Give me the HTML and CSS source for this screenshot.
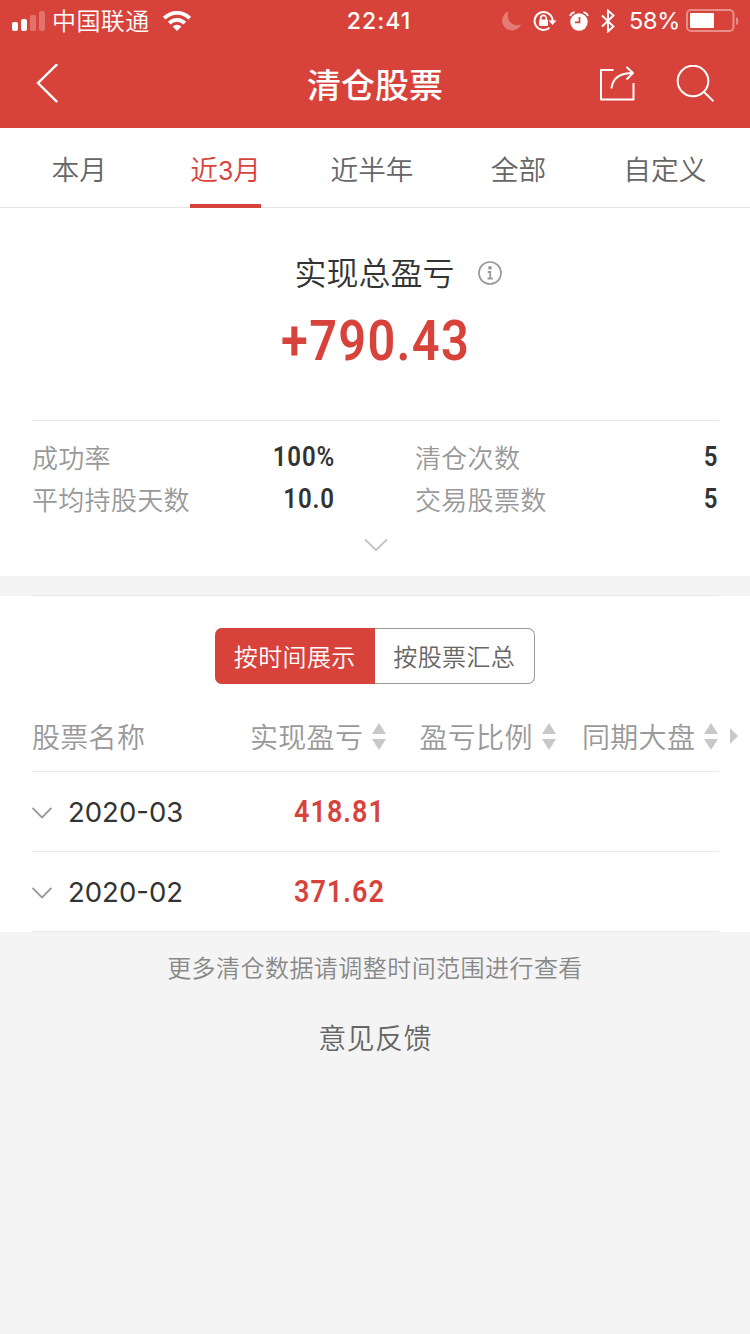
FILE: index.html
```html
<!DOCTYPE html>
<html lang="zh-CN">
<head>
<meta charset="utf-8">
<title>清仓股票</title>
<link rel="stylesheet" href="styles.css">
</head>
<body>
<header class="top">
  <div class="status">
    <div class="status-left">
      <svg width="34" height="20" viewBox="0 0 34 20" fill="#fff"><rect x="0" y="11" width="6" height="9" rx="2"/><rect x="9" y="8" width="6" height="12" rx="2"/><rect x="18" y="4" width="6" height="16" rx="2" opacity=".25"/><rect x="27" y="0" width="6" height="20" rx="2" opacity=".25"/></svg>
      <span class="carrier">中国联通</span>
      <svg class="wifi" width="28" height="21" viewBox="0 0 28 21" fill="none" stroke="#fff" stroke-width="3.8"><path d="M1.3 7.2a18 18 0 0 1 25.4 0"/><path d="M6.2 12.2a11 11 0 0 1 15.6 0"/><path d="M14 20l-4.4-4.4a6.2 6.2 0 0 1 8.8 0z" fill="#fff" stroke="none"/></svg>
    </div>
    <div class="clock">22:41</div>
    <div class="status-right">
      <svg width="20" height="20" viewBox="0 0 20 20" fill="#fff" opacity=".3"><path d="M6.500 .5A9.800 9.800 0 1 0 19 13.500C11 16.500 3.500 9.500 6.500 .5z"/></svg>
      <svg class="lock" width="24" height="22" viewBox="0 0 24 22"><path d="M19.600 11A9 9 0 1 0 16.500 17.800" fill="none" stroke="#fff" stroke-width="2"/><path d="M15.500 10.500h8L19.500 15z" fill="#fff"/><rect x="6" y="9.500" width="9" height="6.500" rx="1" fill="#fff"/><path d="M7.700 10.500V8.200a2.800 2.800 0 0 1 5.600 0v2.300" fill="none" stroke="#fff" stroke-width="1.6"/></svg>
      <svg class="alarm" width="20" height="20" viewBox="0 0 20 20"><circle cx="10" cy="11" r="8.7" fill="#fff"/><path d="M1 5Q2 2 5.6 1.1M19 5Q18 2 14.4 1.1" fill="none" stroke="#fff" stroke-width="1.7"/><path d="M10.5 6v5.3H6" fill="none" stroke="#d7433b" stroke-width="1.7"/></svg>
      <svg class="bt" width="14" height="24" viewBox="0 0 14 24" fill="none" stroke="#fff" stroke-width="1.9"><path d="M1 6.5l11.5 11L7 22.5v-21l5.5 5L1 17.5"/></svg>
      <span class="pct">58%</span>
      <svg width="53" height="24" viewBox="0 0 53 24"><rect x="1" y="1" width="46.500" height="21" rx="4" fill="none" stroke="#fff" stroke-opacity=".4" stroke-width="2"/><rect x="4" y="4" width="24" height="15" rx="1" fill="#fff"/><path d="M50 8q2.500 1 2.500 4t-2.500 4z" fill="#fff" opacity=".4"/></svg>
    </div>
  </div>
  <div class="nav">
    <svg width="22" height="40" viewBox="0 0 22 40" fill="none" stroke="#fff" stroke-width="2.4" stroke-linecap="round"><path d="M20.500 .8L2 19l18.500 18.300"/></svg>
    <h1 class="nav-title">清仓股票</h1>
    <div class="nav-actions">
      <svg width="36" height="36" viewBox="0 0 36 36" fill="none" stroke="#fff" stroke-width="2" stroke-linejoin="round"><path d="M13.500 4H1V33.500H33.500V17"/><path d="M11.500 22.500C12.500 12.500 19.500 7 33 7M26.500 1l6.500 6-6.500 6.500"/></svg>
      <svg width="38" height="38" viewBox="0 0 38 38" fill="none" stroke="#fff" stroke-width="2"><circle cx="17" cy="16" r="15.300"/><path d="M27.500 26.500l10 9.800"/></svg>
    </div>
  </div>
</header>

<nav class="tabs">
  <a class="tab"><span>本月</span></a>
  <a class="tab active"><span>近<b class="tab-num">3</b>月</span></a>
  <a class="tab"><span>近半年</span></a>
  <a class="tab"><span>全部</span></a>
  <a class="tab"><span>自定义</span></a>
</nav>

<section class="summary">
  <div class="sum-title"><span>实现总盈亏</span>
    <svg width="24" height="24" viewBox="0 0 24 24" fill="none" stroke="#999"><circle cx="12" cy="12" r="11" stroke-width="1.700"/><circle cx="12" cy="6.800" r="1.900" fill="#999" stroke="none"/><path d="M9.800 11h2.400v6.500M9.500 17.500h5.200" stroke-width="1.800"/></svg>
  </div>
  <div class="total"><span>+790.43</span></div>
  <div class="stats">
    <div class="stat"><span>成功率</span><strong>100%</strong></div>
    <div class="stat"><span>清仓次数</span><strong>5</strong></div>
    <div class="stat"><span>平均持股天数</span><strong>10.0</strong></div>
    <div class="stat"><span>交易股票数</span><strong>5</strong></div>
  </div>
  <svg class="expand" width="24" height="14" viewBox="0 0 24 14" fill="none" stroke="#c8c8c8" stroke-width="2.200"><path d="M1 1.500l11 10.500 11-10.500"/></svg>
</section>
<div class="gap"></div>

<section class="holdings">
  <div class="segments"><span class="seg on">按时间展示</span><span class="seg">按股票汇总</span></div>
  <div class="thead">
    <span class="c1">股票名称</span>
    <span class="c2">实现盈亏<i class="sort"></i></span>
    <span class="c3">盈亏比例<i class="sort"></i></span>
    <span class="c4">同期大盘<i class="sort"></i></span>
    <i class="more"></i>
  </div>
  <div class="row"><svg width="20" height="12" viewBox="0 0 20 12" fill="none" stroke="#999" stroke-width="1.800"><path d="M.500 1l9.500 9.500L19.500 1"/></svg><span class="date">2020-03</span><strong class="profit">418.81</strong></div>
  <div class="row"><svg width="20" height="12" viewBox="0 0 20 12" fill="none" stroke="#999" stroke-width="1.800"><path d="M.500 1l9.500 9.500L19.500 1"/></svg><span class="date">2020-02</span><strong class="profit">371.62</strong></div>
</section>

<footer class="foot">
  <p class="note">更多清仓数据请调整时间范围进行查看</p>
  <p class="feedback">意见反馈</p>
</footer>
</body>
</html>
```
FILE: styles.css
```css
* { box-sizing: border-box; margin: 0; padding: 0; }
body { width: 750px; height: 1334px; overflow: hidden; background: #f4f4f4; font-family: "Noto Sans CJK SC", sans-serif; font-weight: 350; color: #333; }
svg { display: block; flex: none; }

.top { height: 128px; background: #d7433b; color: #fff; }
.status { height: 40px; display: grid; grid-template-columns: 1fr auto 1fr; padding: 0 11px 0 12px; }
.status-left, .status-right { display: flex; align-items: center; }
.status-right { justify-content: flex-end; }
.carrier { font-size: 24px; line-height: 38px; margin-left: 6px; letter-spacing: .4px; padding-bottom: 2px; }
.wifi { margin-left: 13px; }
.clock { font: 500 23px/42px Inter, sans-serif; letter-spacing: 1px; padding-left: 7px; }
.lock { margin-left: 11px; }
.alarm { margin-left: 12px; }
.bt { margin-left: 12px; }
.pct { font: 400 23.500px/40px Inter, sans-serif; letter-spacing: -.3px; margin: 0 6px 0 14px; }
.nav { height: 88px; display: grid; grid-template-columns: 114px 1fr 114px; align-items: center; padding: 0 36px; }
.nav-title { font-size: 34px; line-height: 88px; height: 88px; font-weight: 500; text-align: center; }
.nav-actions { display: flex; align-items: center; justify-content: space-between; }

.tabs { height: 80px; display: flex; padding: 0 12px 0 6px; background: #fff; border-bottom: 1px solid #e6e6e6; }
.tab { flex: 1; display: flex; justify-content: center; color: #666; font-size: 27.700px; line-height: 80px; }
.tab span { height: 80px; }
.active { color: #d7433b; }
.active span { border-bottom: 4px solid #d7433b; }
.tab-num { font: 400 25px/1 Inter, sans-serif; }

.summary { height: 368px; padding: 40px 31px 0 32px; background: #fff; }
.sum-title { display: flex; justify-content: center; align-items: center; gap: 23px; height: 50px; padding-left: 45px; font-size: 32px; line-height: 46px; }
.sum-title span { padding-bottom: 4px; }
.total { height: 122px; display: flex; justify-content: center; padding-left: 1px; font: 650 56px/86px Roboto, sans-serif; color: #d7433b; }
.total span { letter-spacing: 1.500px; transform: scaleX(.87); }
.stats { display: grid; grid-template-columns: 302px 302px; column-gap: 81px; grid-auto-rows: 42px; padding-top: 15px; border-top: 1px solid #e6e6e6; }
.stat { display: flex; justify-content: space-between; color: #999; font-size: 26px; letter-spacing: .3px; line-height: 42px; }
.stat strong { font: 600 27px/42px Roboto, sans-serif; color: #333; letter-spacing: 1px; margin-right: -1px; transform: scaleX(.89); transform-origin: right; }
.expand { margin: 18px auto 0; }

.gap { height: 20px; padding: 19px 31px 0 32px; }
.gap::after { content: ""; display: block; height: 1px; background: #e9e9e9; }

.holdings { background: #fff; padding-top: 32px; height: 336px; }
.segments { width: 320px; height: 56px; margin: 0 auto; display: flex; border: 1px solid #999; border-left: 0; border-radius: 7px; }
.seg { width: 160px; text-align: center; font-size: 24px; letter-spacing: .4px; line-height: 54px; color: #666; }
.on { background: #d7433b; color: #fff; margin: -1px 0; line-height: 56px; border-radius: 7px 0 0 7px; }
.thead { height: 88px; margin: 0 12px 0 32px; display: flex; align-items: center; color: #999; font-size: 28px; line-height: 66px; letter-spacing: .3px; position: relative; padding-top: 16px; }
.thead::after, .row::after { content: ""; position: absolute; left: 0; bottom: 0; height: 1px; background: #e9e9e9; }
.thead::after { width: 687px; }
.thead span { display: flex; align-items: center; }
.c1 { width: 218px; }
.c2 { width: 169.500px; }
.c3 { width: 162.500px; }
.c4 { width: 137px; }
.sort { display: grid; gap: 5px; margin-left: 9px; }
.sort::before, .sort::after { content: ""; border: 7px solid transparent; }
.sort::before { border-top: 0; border-bottom: 11px solid #c8c8c8; }
.sort::after { border-bottom: 0; border-top: 11px solid #c8c8c8; }
.more { margin-left: 11px; border: 8px solid transparent; border-left-color: #c8c8c8; border-right: 0; }
.row { position: relative; height: 80px; margin: 0 31px 0 32px; padding-top: 1px; display: flex; align-items: center; }
.row::after { width: 100%; }
.date { width: 226px; margin-left: 16px; padding-bottom: 2px; font: 400 27.500px/78px Inter, sans-serif; color: #333; }
.profit { padding-bottom: 2px; font: 600 31px/76px Roboto, sans-serif; color: #d7433b; letter-spacing: 1.200px; transform: scaleX(.87); transform-origin: left; }

.foot { text-align: center; }
.note { font-size: 24px; letter-spacing: .45px; line-height: 36px; padding-top: 17px; color: #888; }
.feedback { font-size: 28px; letter-spacing: .4px; line-height: 40px; margin-top: 32px; color: #666; }
```
